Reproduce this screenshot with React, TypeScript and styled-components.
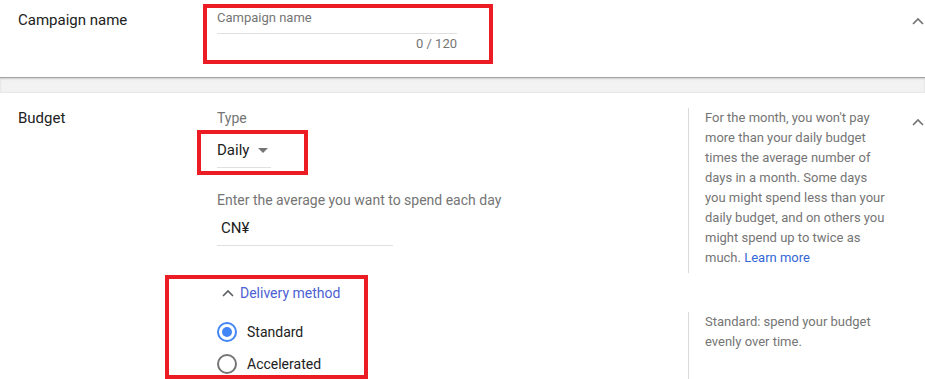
import React from "react";
import styled, { createGlobalStyle } from "styled-components";

const GlobalStyle = createGlobalStyle`
  html, body {
    margin: 0;
    padding: 0;
    background: #ffffff;
    overflow: hidden;
  }
  body {
    font-family: Roboto, "Noto Sans", Arial, sans-serif;
    color: #212121;
  }
`;

const Page = styled.div`
  width: 925px;
`;

const Section = styled.section<{ $top: number; $height?: number }>`
  display: grid;
  grid-template-columns: 217px 471px 217px 20px;
  padding-top: ${(p) => p.$top}px;
  ${(p) => (p.$height ? `height: ${p.$height}px;` : "")}
  box-sizing: border-box;
  background: #fff;
`;

const Band = styled.div`
  height: 16px;
  background: #f2f2f2;
  border-top: 1px solid #a3a3a3;
  border-bottom: 1px solid #e8e8e8;
  box-shadow: inset 0 1px 2px rgba(0, 0, 0, 0.15);
  box-sizing: border-box;
`;

const Label = styled.div<{ $top: number }>`
  padding-left: 18px;
  padding-top: ${(p) => p.$top}px;
  font-size: 15px;
  line-height: 20px;
  color: #212121;
`;

const Main = styled.div`
  display: flex;
  flex-direction: column;
  align-items: flex-start;
`;

const Highlight = styled.div<{ $pad: string; $shift: number; $width?: number }>`
  border: 4px solid #ec1c24;
  padding: ${(p) => p.$pad};
  margin-left: ${(p) => -p.$shift}px;
  ${(p) => (p.$width ? `width: ${p.$width}px;` : "")}
  box-sizing: border-box;
`;

const Placeholder = styled.div`
  font-size: 13px;
  line-height: 16px;
  color: #757575;
  padding-bottom: 7px;
  border-bottom: 1px solid #e0e0e0;
  width: 240px;
`;

const Counter = styled.div`
  font-size: 13px;
  line-height: 16px;
  color: #757575;
  text-align: right;
  margin-top: 2px;
  width: 240px;
`;

const Caption = styled.div<{ $top?: number }>`
  font-size: 14px;
  line-height: 20px;
  color: #757575;
  margin-top: ${(p) => p.$top ?? 0}px;
`;

const Select = styled.div`
  display: flex;
  align-items: center;
  gap: 9px;
  width: 54px;
  height: 20px;
  padding-bottom: 7px;
  border-bottom: 1px solid #e0e0e0;
  font-size: 15px;
  line-height: 20px;
  color: #212121;
`;

const Caret = styled.span`
  width: 0;
  height: 0;
  border-left: 5px solid transparent;
  border-right: 5px solid transparent;
  border-top: 5px solid #757575;
  margin-top: 1px;
`;

const Amount = styled.div`
  width: 172px;
  margin-top: 8px;
  padding: 0 0 7px 4px;
  border-bottom: 1px solid #e0e0e0;
  font-size: 15px;
  line-height: 20px;
  color: #212121;
`;

const Help = styled.div<{ $top: number; $bottom: number }>`
  margin-top: ${(p) => p.$top}px;
  padding: 0 18px ${(p) => p.$bottom}px 16px;
  border-left: 1px solid #dadada;
  font-size: 13px;
  line-height: 20px;
  color: #757575;
`;

const Link = styled.a`
  color: #3367d6;
  text-decoration: none;
`;

const ChevronCell = styled.div<{ $top: number }>`
  padding-top: ${(p) => p.$top}px;
  padding-left: 7px;
  line-height: 0;
`;

const Toggle = styled.div`
  display: flex;
  align-items: center;
  gap: 6px;
  margin-left: 5px;
  font-size: 14px;
  line-height: 20px;
  color: #4d5fd3;
`;

const RadioGroup = styled.div`
  display: flex;
  flex-direction: column;
  gap: 12px;
  margin-top: 19px;
  padding-bottom: 1px;
`;

const RadioRow = styled.label`
  display: flex;
  align-items: center;
  gap: 10px;
  height: 20px;
  font-size: 14px;
  color: #212121;
`;

const RadioCircle = styled.span<{ $on?: boolean }>`
  width: 20px;
  height: 20px;
  box-sizing: border-box;
  border-radius: 50%;
  border: 2px solid ${(p) => (p.$on ? "#4285f4" : "#757575")};
  display: flex;
  align-items: center;
  justify-content: center;
  &::after {
    content: "";
    width: 10px;
    height: 10px;
    border-radius: 50%;
    background: ${(p) => (p.$on ? "#4285f4" : "transparent")};
  }
`;

const Chevron = ({ color = "#757575" }: { color?: string }) => (
  <svg width="12" height="8" viewBox="0 0 12 8">
    <polyline points="1,7 6,2 11,7" fill="none" stroke={color} strokeWidth="1.7" />
  </svg>
);

const Radio = ({ label, on }: { label: string; on?: boolean }) => (
  <RadioRow>
    <RadioCircle $on={on} />
    {label}
  </RadioRow>
);

const App = () => {
  return (
    <Page>
      <GlobalStyle />
      <Section $top={0} $height={77}>
        <Label $top={10}>Campaign name</Label>
        <Main>
          <Highlight $pad="2px 32px 8px 10px" $shift={14} style={{ marginTop: 4 }}>
            <Placeholder>Campaign name</Placeholder>
            <Counter>0 / 120</Counter>
          </Highlight>
        </Main>
        <div />
        <ChevronCell $top={17}>
          <Chevron />
        </ChevronCell>
      </Section>
      <Band />
      <Section $top={15}>
        <Label $top={0}>Budget</Label>
        <Main>
          <Caption>Type</Caption>
          <Highlight $pad="6px 33px 3px 16px" $shift={20} style={{ marginTop: 2 }}>
            <Select>
              Daily
              <Caret />
            </Select>
          </Highlight>
          <Caption $top={15}>Enter the average you want to spend each day</Caption>
          <Amount>CN¥</Amount>
        </Main>
        <Help $top={0} $bottom={5}>
          For the month, you won't pay more than your daily budget times the average number of
          days in a month. Some days you might spend less than your daily budget, and on others
          you might spend up to twice as much. <Link href="#">Learn more</Link>
        </Help>
        <ChevronCell $top={10}>
          <Chevron />
        </ChevronCell>

        <div />
        <Main>
          <Highlight $pad="4px 0 0 48px" $shift={52} $width={203} style={{ marginTop: 2 }}>
            <Toggle>
              <Chevron color="#5f6368" />
              Delivery method
            </Toggle>
            <RadioGroup>
              <Radio label="Standard" on />
              <Radio label="Accelerated" />
            </RadioGroup>
          </Highlight>
        </Main>
        <Help $top={39} $bottom={40}>
          Standard: spend your budget evenly over time.
        </Help>
        <div />
      </Section>
    </Page>
  );
};

export default App;
